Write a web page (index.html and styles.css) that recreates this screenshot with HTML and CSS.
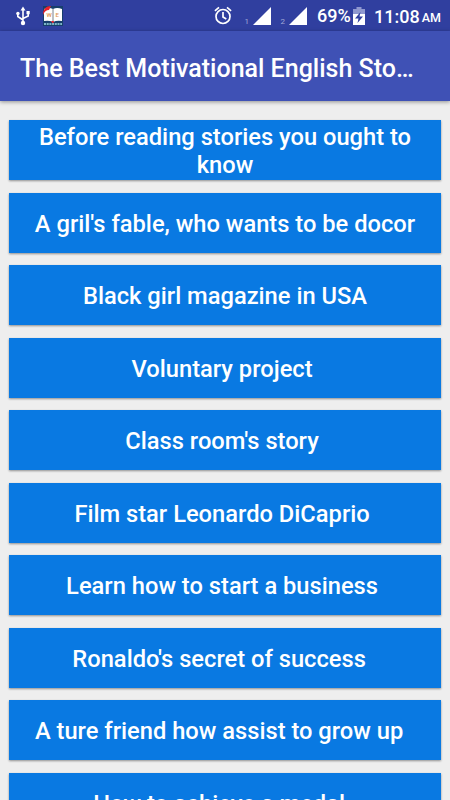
FILE: index.html
```html
<!DOCTYPE html>
<html lang="en">
<head>
    <meta charset="UTF-8">
    <meta name="viewport" content="width=device-width, initial-scale=1.0">
    <title>The Best Motivational English Stories</title>
    <link rel="stylesheet" href="styles.css">
</head>
<body>
    <div class="status-bar">
        <svg class="usb" width="14" height="20" viewBox="0 0 14 20" fill="none" stroke="#fff" stroke-width="1.6">
            <path d="M7 3v14M1.8 8v2.5L7 14M12.2 7v3L7 12.5"/>
            <path d="M4.5 4.5L7 .5l2.5 4zM10.5 5h3.2v3.2h-3.2z" fill="#fff" stroke="none"/>
            <circle cx="1.9" cy="7.5" r="1.7" fill="#fff" stroke="none"/>
            <circle cx="7" cy="17" r="2.2" fill="#fff" stroke="none"/>
        </svg>
        <svg class="book" width="20" height="20" viewBox="0 0 20 20">
            <path fill="#173f6c" d="M0 0h20v20H0z"/>
            <path fill="#fff" d="M1 3q5-2 9 0q4-2 9 0v12q-5-1-9 1q-4-2-9-1z"/>
            <path stroke="#53606e" stroke-width=".8" d="M10 3v13"/>
            <path fill="#e8232e" d="M0 9C0 3 3 0 8 0L6 4Q2 4 0 9zM8 15h3l-1 3z"/>
            <text class="book-letter" x="3.5" y="10.5">W</text>
            <text class="book-letter" x="12.5" y="10.5">E</text>
            <path stroke="#9edbe5" stroke-width="1.6" stroke-dasharray="2 .7" d="M1 18h18"/>
        </svg>
        <svg class="alarm" width="18" height="19" viewBox="0 0 18 19" fill="none" stroke="#fff" stroke-width="1.7">
            <circle cx="9" cy="10.5" r="7"/>
            <path d="M.9 4.800L5 1.400M17.100 4.800L13 1.400M9 6v5l3.300 2"/>
        </svg>
        <span class="sim sim-one">1</span>
        <svg class="signal" width="18" height="18" viewBox="0 0 18 18"><path fill="#fff" d="M0 18L18 0v18z"/></svg>
        <span class="sim sim-two">2</span>
        <svg class="signal" width="18" height="18" viewBox="0 0 18 18"><path fill="#fff" d="M0 18L18 0v18z"/></svg>
        <span class="percent">69%</span>
        <svg class="battery" width="12" height="18" viewBox="0 0 12 18">
            <path fill="#8f98cf" d="M0 2h3.5V0h5v2H12v5H0z"/>
            <path fill="#fff" d="M0 7h12v11H0z"/>
            <path fill="#303f9f" d="M7.5 5L2 11.5h3.5L4.5 16L10 9.5H6.5z"/>
        </svg>
        <span class="clock">11:08</span>
        <span class="meridiem">AM</span>
    </div>
    <header class="app-bar">
        <h1>The Best Motivational English Sto…</h1>
    </header>
    <main class="story-list">
        <button>Before reading stories you ought to know</button>
        <button>A gril's fable, who wants to be docor</button>
        <button>Black girl magazine in USA</button>
        <button>Voluntary project&nbsp;</button>
        <button>Class room's story&nbsp;</button>
        <button>Film star Leonardo DiCaprio&nbsp;</button>
        <button>Learn how to start a business&nbsp;</button>
        <button>Ronaldo's secret of success&nbsp;&nbsp;</button>
        <button>A ture friend how assist to grow up&nbsp;&nbsp;</button>
        <button>How to achieve a medal&nbsp;&nbsp;</button>
    </main>
</body>
</html>
```
FILE: styles.css
```css
body {
    font-family: Roboto, sans-serif;
    margin: 0;
    height: 100vh;
    overflow: hidden;
    background-color: #eeeeee;
    color: white;
}
.status-bar {
    display: flex;
    align-items: center;
    height: 31px;
    box-sizing: border-box;
    padding-left: 16px;
    background-color: #303f9f;
    font-weight: 500;
    line-height: 31px;
}
.status-bar svg {
    flex-shrink: 0;
}
.book {
    margin-left: 12.5px;
}
.book-letter {
    font-size: 6px;
    fill: #df9653;
}
.alarm {
    margin-left: 151px;
}
.sim {
    width: 8px;
    color: #a1a8d6;
    font-size: 8px;
    font-weight: 400;
    padding-top: 12px;
}
.sim-one {
    margin-left: 13px;
}
.sim-two {
    margin-left: 10px;
}
.percent {
    width: 36px;
    margin-left: 10.5px;
    font-size: 18px;
}
.clock {
    margin-left: 9px;
    padding-top: 1px;
    font-size: 18px;
}
.meridiem {
    margin-left: 2px;
    padding-top: 4px;
    font-size: 12.5px;
}
.app-bar {
    position: relative;
    height: 70px;
    padding: 0 20px;
    display: flex;
    align-items: center;
    background-color: #3f51b5;
    box-shadow: 0 1px 4px rgba(0, 0, 0, 0.4);
}
h1 {
    margin: 4px 0 0;
    font-size: 25px;
    font-weight: 500;
    white-space: nowrap;
}
.story-list {
    display: flex;
    flex-direction: column;
    gap: 12.5px;
    padding: 19px 9px 0;
}
button {
    flex-shrink: 0;
    height: 60px;
    padding: 2px 20px 0;
    border: none;
    background-color: #0979e2;
    box-shadow: 0 1px 2px rgba(0, 0, 0, 0.4);
    color: white;
    font-family: inherit;
    font-size: 23.7px;
    font-weight: 500;
    line-height: 28px;
    cursor: pointer;
}
```
